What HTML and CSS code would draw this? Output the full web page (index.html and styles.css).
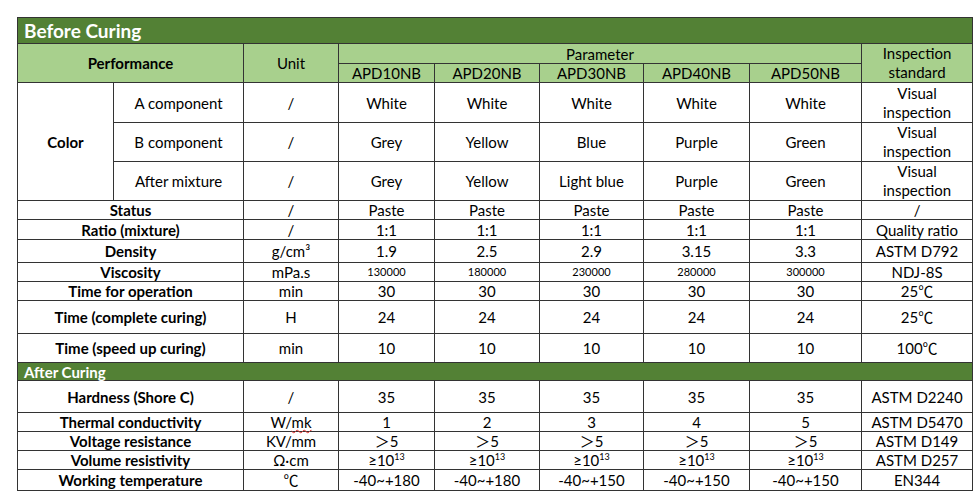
FILE: index.html
```html
<!DOCTYPE html>
<html>
<head>
<meta charset="utf-8">
<link rel="stylesheet" href="styles.css">
</head>
<body>
<div class="page">
<table class="spec">
  <colgroup>
    <col class="c1"><col class="c2"><col class="c3"><col class="c4"><col class="c5"><col class="c6"><col class="c7"><col class="c8"><col class="c9">
  </colgroup>
  <tr class="h26"><td class="section title" colspan="9">Before Curing</td></tr>
  <tr class="h20 head">
    <td colspan="2" rowspan="2" class="b">Performance</td>
    <td rowspan="2">Unit</td>
    <td colspan="5">Parameter</td>
    <td rowspan="2" class="two">Inspection<br>standard</td>
  </tr>
  <tr class="h19 head">
    <td>APD10NB</td><td>APD20NB</td><td>APD30NB</td><td>APD40NB</td><td>APD50NB</td>
  </tr>
  <tr class="h40">
    <td rowspan="3" class="b">Color</td>
    <td>A component</td><td>/</td><td>White</td><td>White</td><td>White</td><td>White</td><td>White</td>
    <td class="two">Visual<br>inspection</td>
  </tr>
  <tr class="h39">
    <td>B component</td><td>/</td><td>Grey</td><td>Yellow</td><td>Blue</td><td>Purple</td><td>Green</td>
    <td class="two">Visual<br>inspection</td>
  </tr>
  <tr class="h39">
    <td>After mixture</td><td>/</td><td>Grey</td><td>Yellow</td><td>Light blue</td><td>Purple</td><td>Green</td>
    <td class="two">Visual<br>inspection</td>
  </tr>
  <tr class="h19">
    <td colspan="2" class="b">Status</td><td>/</td><td>Paste</td><td>Paste</td><td>Paste</td><td>Paste</td><td>Paste</td><td>/</td>
  </tr>
  <tr class="h20">
    <td colspan="2" class="b">Ratio (mixture)</td><td>/</td><td>1:1</td><td>1:1</td><td>1:1</td><td>1:1</td><td>1:1</td><td>Quality ratio</td>
  </tr>
  <tr class="h23">
    <td colspan="2" class="b">Density</td><td>g/cm³</td><td>1.9</td><td>2.5</td><td>2.9</td><td>3.15</td><td>3.3</td><td>ASTM D792</td>
  </tr>
  <tr class="h19">
    <td colspan="2" class="b">Viscosity</td><td>mPa.s</td><td class="sm">130000</td><td class="sm">180000</td><td class="sm">230000</td><td class="sm">280000</td><td class="sm">300000</td><td>NDJ-8S</td>
  </tr>
  <tr class="h19">
    <td colspan="2" class="b">Time for operation</td><td>min</td><td>30</td><td>30</td><td>30</td><td>30</td><td>30</td><td>25℃</td>
  </tr>
  <tr class="h33">
    <td colspan="2" class="b">Time (complete curing)</td><td>H</td><td>24</td><td>24</td><td>24</td><td>24</td><td>24</td><td>25℃</td>
  </tr>
  <tr class="h29">
    <td colspan="2" class="b">Time (speed up curing)</td><td>min</td><td>10</td><td>10</td><td>10</td><td>10</td><td>10</td><td>100℃</td>
  </tr>
  <tr class="h18"><td class="section sub" colspan="9">After Curing</td></tr>
  <tr class="h32">
    <td colspan="2" class="b">Hardness (Shore C)</td><td>/</td><td>35</td><td>35</td><td>35</td><td>35</td><td>35</td><td>ASTM D2240</td>
  </tr>
  <tr class="h18">
    <td colspan="2" class="b">Thermal conductivity</td><td>W/<span class="spell">mk</span></td><td>1</td><td>2</td><td>3</td><td>4</td><td>5</td><td>ASTM D5470</td>
  </tr>
  <tr class="h19">
    <td colspan="2" class="b">Voltage resistance</td><td>KV/mm</td><td>＞5</td><td>＞5</td><td>＞5</td><td>＞5</td><td>＞5</td><td>ASTM D149</td>
  </tr>
  <tr class="h19">
    <td colspan="2" class="b">Volume resistivity</td><td>Ω·cm</td><td>≥10<sup>13</sup></td><td>≥10<sup>13</sup></td><td>≥10<sup>13</sup></td><td>≥10<sup>13</sup></td><td>≥10<sup>13</sup></td><td>ASTM D257</td>
  </tr>
  <tr class="h21">
    <td colspan="2" class="b">Working temperature</td><td>℃</td><td>-40~+180</td><td>-40~+180</td><td>-40~+150</td><td>-40~+150</td><td>-40~+150</td><td>EN344</td>
  </tr>
</table>
</div>
</body>
</html>
```

FILE: styles.css
```css
html, body {
  margin: 0;
  padding: 0;
  background: #ffffff;
}

.page {
  padding: 17px 0 0 17px;
}

.spec {
  border-collapse: collapse;
  table-layout: fixed;
  width: 955px;
  font-family: Lato, "Open Sans", "Noto Sans CJK SC", sans-serif;
  font-size: 15px;
  color: #000;
}

.c1 { width: 96px; }
.c2 { width: 130px; }
.c3 { width: 95px; }
.c4 { width: 96px; }
.c5 { width: 105px; }
.c6 { width: 104px; }
.c7 { width: 106px; }
.c8 { width: 112px; }
.c9 { width: 111px; }

.spec td {
  border: 1px solid #333;
  padding: 0;
  text-align: center;
  vertical-align: middle;
  line-height: 18px;
  white-space: nowrap;
}

.h18 { height: 18px; }
.h19 { height: 19px; }
.h20 { height: 20px; }
.h21 { height: 21px; }
.h23 { height: 23px; }
.h26 { height: 26px; }
.h29 { height: 29px; }
.h32 { height: 32px; }
.h33 { height: 33px; }
.h39 { height: 39px; }
.h40 { height: 40px; }

.spec td.two {
  line-height: 19px;
}

.head td {
  background: #a8d08d;
}

.spec td.section {
  background: #538135;
  color: #ffffff;
  font-weight: 700;
  text-align: left;
  padding-left: 6px;
}

.spec td.title {
  font-size: 19px;
  line-height: 24px;
}

.spec td.sub {
  font-size: 15px;
  line-height: 16px;
}

.b {
  font-weight: 700;
}

.spec td.sm {
  font-size: 11px;
}

sup {
  font-size: 9px;
  line-height: 0;
  vertical-align: 6px;
}

.spell {
  text-decoration: underline wavy #e03030;
  text-decoration-thickness: 1px;
  text-underline-offset: 1px;
}
```
